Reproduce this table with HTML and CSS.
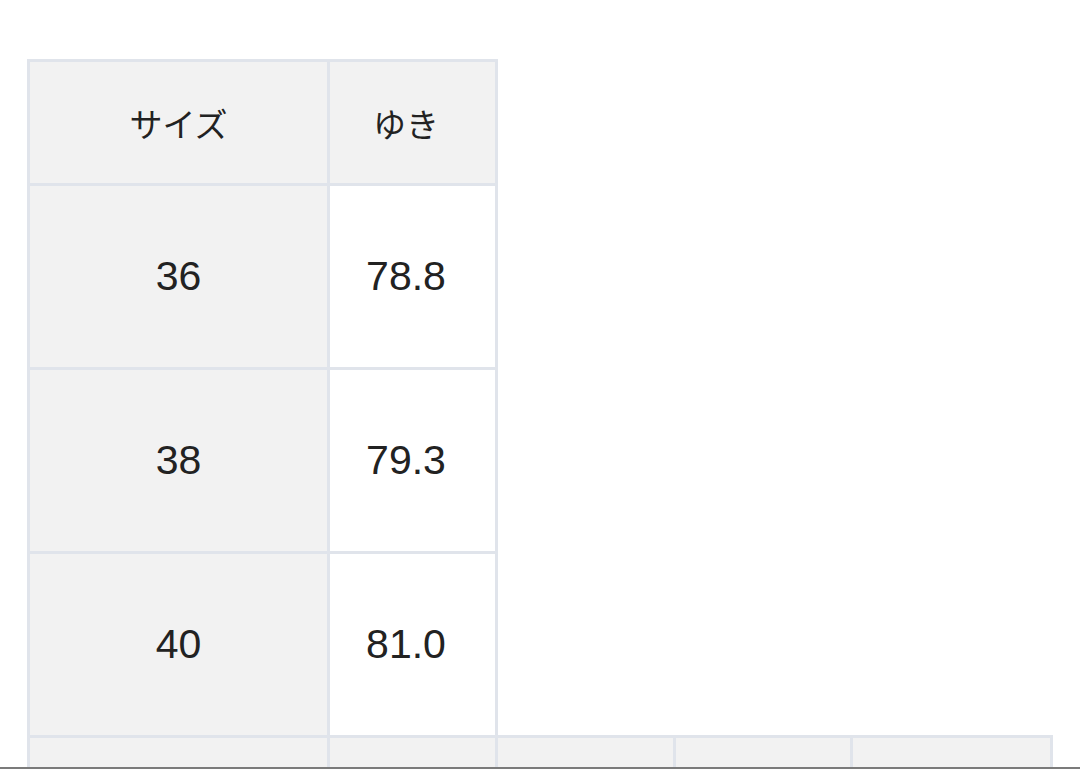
FILE: index.html
```html
<!DOCTYPE html>
<html lang="ja">
<head>
<meta charset="utf-8">
<title>サイズ表</title>
<link rel="stylesheet" href="styles.css">
</head>
<body>
<main class="page">
  <table class="size-table">
    <colgroup><col class="c1"><col class="c2"></colgroup>
    <tr class="head-row">
      <th class="cell head">サイズ</th>
      <th class="cell head val">ゆき</th>
    </tr>
    <tr class="row">
      <th class="cell label">36</th>
      <td class="cell val">78.8</td>
    </tr>
    <tr class="row">
      <th class="cell label">38</th>
      <td class="cell val">79.3</td>
    </tr>
    <tr class="row">
      <th class="cell label">40</th>
      <td class="cell val">81.0</td>
    </tr>
  </table>
  <table class="size-table next">
    <colgroup><col class="c1"><col class="c2"><col class="c3"><col class="c4"><col class="c5"></colgroup>
    <tr class="row">
      <th class="cell head"></th>
      <th class="cell head"></th>
      <th class="cell head"></th>
      <th class="cell head"></th>
      <th class="cell head"></th>
    </tr>
  </table>
</main>
<div class="bottom-edge"></div>
</body>
</html>
```
FILE: styles.css
```css
html, body {
  margin: 0;
  padding: 0;
  background: #ffffff;
  overflow: hidden;
  height: 100%;
}
.page {
  padding: 59px 0 0 27px;
  display: flex;
  flex-direction: column;
  align-items: flex-start;
}
.size-table {
  border-collapse: collapse;
  table-layout: fixed;
  width: 467px;
  border: 3px solid #e0e4eb;
}
.size-table.next {
  width: 1022px;
  margin-top: -3px;
}
.c1 { width: 300px; }
.c2 { width: 168px; }
.c3 { width: 178px; }
.c4 { width: 177px; }
.c5 { width: 200px; }
.cell {
  border: 3px solid #e0e4eb;
  padding: 0;
  text-align: center;
  vertical-align: middle;
  color: #222222;
  font-weight: normal;
}
.head {
  background: #f2f2f2;
  font-family: "Noto Sans CJK JP", "Liberation Sans", sans-serif;
  font-size: 33px;
  font-weight: 400;
  height: 121px;
}
.label {
  background: #f2f2f2;
  font-family: "Liberation Sans", Arial, sans-serif;
  font-size: 41px;
}
.val {
  background: #ffffff;
  font-family: "Liberation Sans", Arial, sans-serif;
  font-size: 41px;
  padding-right: 13px;
}
.head.val {
  background: #f2f2f2;
  font-family: "Noto Sans CJK JP", "Liberation Sans", sans-serif;
  font-size: 33px;
  font-weight: 400;
}
.row .cell { height: 181px; }
.bottom-edge {
  position: fixed;
  left: 0;
  right: 0;
  bottom: 0;
  height: 2px;
  background: #7b7b7b;
}
```
